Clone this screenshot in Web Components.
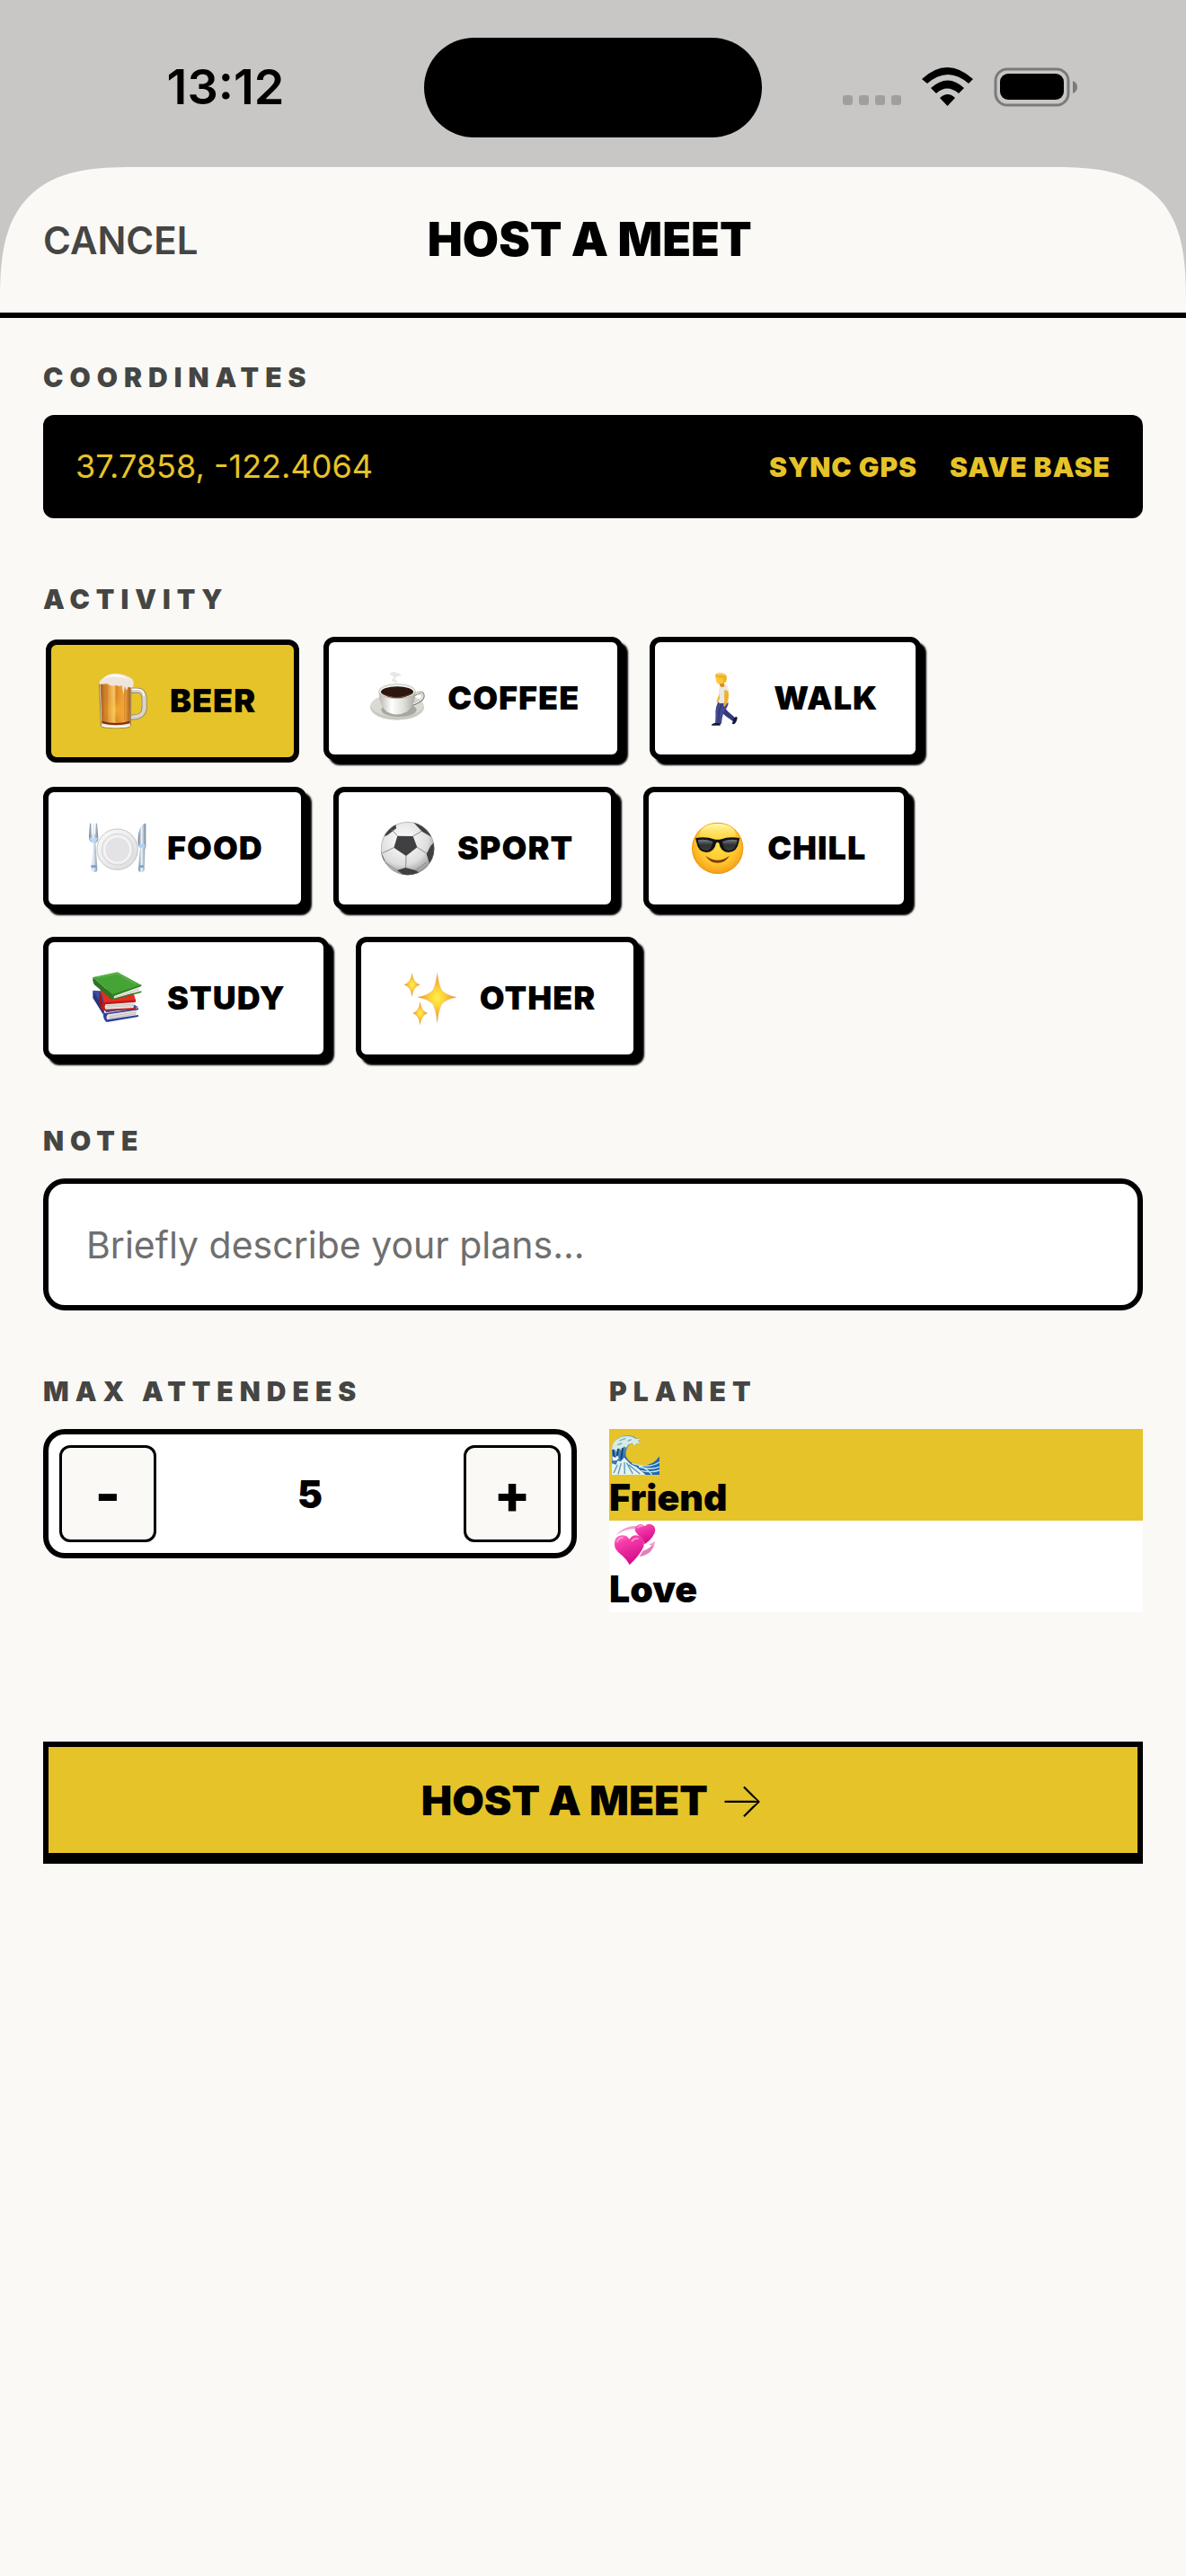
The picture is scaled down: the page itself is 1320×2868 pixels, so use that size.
<!DOCTYPE html>
<html lang="en">
<head>
<meta charset="utf-8">
<meta name="viewport" content="width=device-width, initial-scale=1">
<title>Host a Meet</title>
<style>
    :root {
        --paper: #faf9f5;
        --ink: #000;
        --muted: #454543;
        --accent: #e6c328;
        --backdrop: #c8c7c5;
    }
    body {
        margin: 0;
        background: var(--backdrop);
        color: var(--ink);
        font-family: Inter, "Liberation Sans", sans-serif;
    }
</style>
</head>
<body>
<host-screen></host-screen>

<script>
const LABEL_CSS = `
    .label {
        display: block;
        margin: 0 0 24px;
        font-size: 30px;
        line-height: 36px;
        font-weight: 900;
        letter-spacing: 7px;
        color: var(--muted);
        text-transform: uppercase;
    }
`;

// Pictograms, keyed by name: [viewBox, markup]
const PICTOS = {
    beer: ['0 0 210 195', `
        <defs>
            <linearGradient id="b" x1="0" x2="1"><stop offset="0" stop-color="#a85a1c"/><stop offset=".2" stop-color="#d98a2b"/><stop offset=".45" stop-color="#f6c565"/><stop offset=".55" stop-color="#e58a22"/><stop offset=".8" stop-color="#f0a93c"/><stop offset="1" stop-color="#a9571a"/></linearGradient>
            <radialGradient id="g" cy=".6"><stop offset="0" stop-color="#ffd84a"/><stop offset="1" stop-color="#f09a20" stop-opacity="0"/></radialGradient>
        </defs>
        <path d="M136 62h24c20 0 25 12 25 30v26c0 22-12 34-46 34" fill="none" stroke="#8d8272" stroke-width="18"/>
        <path d="M136 62h24c20 0 25 12 25 30v26c0 22-12 34-46 34" fill="none" stroke="#dcd4c5" stroke-width="13"/>
        <path d="M140 58h22c16 0 20 8 22 22" fill="none" stroke="#fff" stroke-width="4"/>
        <path d="M34 34l6 146q1 8 50 8t49-8l2-146z" fill="#e9e1cf" stroke="#6f5632" stroke-width="2"/>
        <path d="M38 40l5 126q2 9 47 9t47-9l2-126z" fill="url(#b)"/>
        <path d="M60 45v118M91 42v124M119 45v118" stroke="#9a4f17" stroke-width="2" opacity=".55"/>
        <ellipse cx="88" cy="118" rx="45" ry="48" fill="url(#g)" opacity=".5"/>
        <path d="M43 164q47 14 94 0v8q-47 12-94 0z" fill="#81310c"/>
        <path d="M45 180q45 9 92 0" fill="none" stroke="#fff" stroke-width="4"/>
        <path d="M32 40q3-12 16-19Q60 6 88 5q35 2 54 17 10 9 6 26l-5 5-12-3-5 12-6-14-5 27-5-29-10 2-9-3-16 2-15-9-14 3z" fill="#eee5dc"/>
        <path d="M46 23q16-15 42-14t46 17q-40-17-88-3z" fill="#fffaf5"/>`],
    coffee: ['0 0 210 195', `
        <defs>
            <linearGradient id="c" x1="0" x2="1"><stop offset="0" stop-color="#b7b5ac"/><stop offset=".35" stop-color="#fff"/><stop offset=".7" stop-color="#dddcd5"/><stop offset="1" stop-color="#a9a79e"/></linearGradient>
        </defs>
        <ellipse cx="102" cy="127" rx="90" ry="43" fill="#c9cac4"/>
        <ellipse cx="102" cy="121" rx="88" ry="37" fill="#d9dad4"/>
        <ellipse cx="108" cy="136" rx="59" ry="23" fill="#a6a89f"/>
        <path d="M159 86q25-14 30 0 5 18-39 33" fill="none" stroke="#77756e" stroke-width="9"/>
        <path d="M159 85q25-13 29 1 4 17-38 32" fill="none" stroke="#efeeea" stroke-width="5"/>
        <path d="M41 74q1 51 28 69 34 17 67-1 27-21 27-68z" fill="url(#c)"/>
        <ellipse cx="102" cy="74" rx="61" ry="24" fill="#f4f4f0" stroke="#a5a49d" stroke-width="2"/>
        <ellipse cx="102" cy="76" rx="54" ry="18" fill="#2c1710"/>
        <path d="M52 80q50 27 101-1-18 18-51 18T52 80z" fill="#6b3d25"/>
        <path d="M75 18q15-15 24-6 15 0 16 11-17-3-20 12 12 6 5 13-9-8-15-7-2-9 7-11-4-10-17-12z" fill="#c9c9c9" opacity=".45"/>`],
    walk: ['0 0 210 195', `
        <path d="M98 112q9 22 26 35 12 9 20 19l-10 8q-10-7-24-17-15-10-22-40z" fill="#343a79"/>
        <path d="M134 168l10-10 5 3q-1 15-11 23l-7-2 4-10z" fill="#14193b"/>
        <path d="M84 110h35q1 12-13 30-8 14-10 42H75q2-29 1-41 1-16 8-31z" fill="#42498f"/>
        <path d="M97 117q-12 20-11 61" fill="none" stroke="#303671" stroke-width="4"/>
        <path d="M64 184q11-7 15-4h13v8H63z" fill="#14193b"/>
        <path d="M89 54q18-8 26-1 8 20 4 60l-31 1q2-20-2-30z" fill="#e9e9e6"/>
        <path d="M106 70q15-3 14 18 0 13-5 25l-8 12-5-4 4-14-1-18z" fill="#f0b22c"/>
        <path d="M89 82l-10 27 5 3 6-14z" fill="#f0b22c"/>
        <path d="M87 42l17 2 2 14q-9 4-14 0z" fill="#d88d1b"/>
        <path d="M75 22q2-9 17-10 20 2 21 18 1 14-10 17l-18 3-6-7z" fill="#ffc83d"/>
        <path d="M76 24q-2-7 8-10 22-5 29 9 3 12-6 23l-6-2q2-10-3-15-10 3-22-5z" fill="#efb527"/>
        <path d="M82 18q12-6 24 1" fill="none" stroke="#ffe27a" stroke-width="4"/>`],
    food: ['0 0 210 195', `
        <defs>
            <linearGradient id="m" x1="0" x2="1"><stop offset="0" stop-color="#617386"/><stop offset=".45" stop-color="#eaf4ff"/><stop offset="1" stop-color="#74828f"/></linearGradient>
            <linearGradient id="p" x1="0" y1="0" x2="1" y2="1"><stop offset="0" stop-color="#fdfdfd"/><stop offset="1" stop-color="#d9dadc"/></linearGradient>
        </defs>
        <circle cx="104" cy="101" r="68" fill="url(#p)" stroke="#a9abae" stroke-width="2"/>
        <circle cx="104" cy="101" r="52" fill="#ececed" stroke="#c5c6c9" stroke-width="2"/>
        <circle cx="104" cy="102" r="43" fill="#e3e3e5" stroke="#fafafa" stroke-width="4"/>
        <path d="M12 14h4l2 37h3l1-37h4l1 37h3l2-37h4l4 48q0 13-9 18l6 87q0 10-9 10t-10-10l5-87Q10 74 9 62z" fill="url(#m)"/>
        <path d="M10 61q3 14 15 18 11-4 14-18-14 7-29 0z" fill="#b4dcff"/>
        <path d="M194 14l5 1v79l-3 5-2 70q-2 9-10 9-9 0-10-9l6-73q-7-4-7-18-1-53 21-64z" fill="url(#m)"/>
        <path d="M176 83h20v13l-17-1z" fill="#a9d5fb"/>
        <path d="M16 158h18M177 158h15" stroke="#76a7cf" stroke-width="8"/>`],
    sport: ['0 0 210 195', `
        <defs>
            <radialGradient id="s" cx=".42" cy=".35" r=".65"><stop offset="0" stop-color="#fff"/><stop offset=".7" stop-color="#dedede"/><stop offset="1" stop-color="#9a9a9a"/></radialGradient>
            <clipPath id="k"><circle cx="104" cy="98" r="89"/></clipPath>
        </defs>
        <circle cx="104" cy="98" r="89" fill="url(#s)"/>
        <g clip-path="url(#k)" fill="#404042">
            <path d="M70 56l52 1 14 37-37 29-41-28z"/>
            <path d="M122 9l39 6 25 46-34-20z"/>
            <path d="M64 9L20 50 7 65l30-12 29-22z"/>
            <path d="M196 74l-15 15-14 27 10 32 24-30z"/>
            <path d="M12 91l6 25 12 29-22-24z"/>
            <path d="M68 171l29-9 34 9 15 10-45 12z"/>
            <g fill="none" stroke="#8b8b8b" stroke-width="3">
                <path d="M70 56L50 34M122 57l29-17M136 94l31 20M99 123l-1 39M58 95l-37 18M131 171l35-26M68 171l-38-26"/>
            </g>
        </g>
        <circle cx="104" cy="98" r="88" fill="none" stroke="#777" stroke-width="2" opacity=".6"/>`],
    chill: ['0 0 210 195', `
        <defs>
            <radialGradient id="f" cx=".5" cy=".42" r=".6"><stop offset="0" stop-color="#ffe144"/><stop offset=".65" stop-color="#ffc42b"/><stop offset="1" stop-color="#f39818"/></radialGradient>
            <linearGradient id="h" x1="0" y1="0" x2="0" y2="1"><stop offset="0" stop-color="#fffbb0"/><stop offset="1" stop-color="#ffe14a" stop-opacity="0"/></linearGradient>
            <linearGradient id="l" x1="0" y1="0" x2="0" y2="1"><stop offset="0" stop-color="#777b80"/><stop offset=".5" stop-color="#2e3032"/><stop offset="1" stop-color="#3a3c3e"/></linearGradient>
        </defs>
        <circle cx="104" cy="97" r="86" fill="url(#f)"/>
        <circle cx="104" cy="97" r="84" fill="none" stroke="#e58b10" stroke-width="3" opacity=".55"/>
        <ellipse cx="104" cy="49" rx="60" ry="34" fill="url(#h)"/>
        <path d="M30 63q38-6 61 4 13 3 26 0 23-10 61-4l-3 12q-5 35-35 36-26-1-31-31-5-5-10 0-6 30-32 31-29-1-34-36z" fill="#111214"/>
        <path d="M38 70q25-5 50 5-3 30-23 30-23-1-27-35zM170 70q-25-5-50 5 3 30 23 30 23-1 27-35z" fill="url(#l)"/>
        <path d="M64 122q40 30 80 0-14 24-40 24t-40-24z" fill="#793c0a"/>`],
    study: ['0 0 210 195', `
        <path d="M22 71l28 29-3 4L71 175 22 96z" fill="#28367e"/>
        <path d="M22 71l60 4 92 52-20 6-86 14z" fill="#3c4da8"/>
        <path d="M58 146l112-18-4 30-98 16z" fill="#e5e2e2"/>
        <path d="M68 147l106-17v6L72 151q-8 8-2 18l104-16v6L68 177q-16-14-8-31z" fill="#303f96"/>
        <path d="M76 164l90-14M77 158l90-14" stroke="#b1adb0" stroke-width="2"/>
        <path d="M45 70l-3 37 10 31 4-27z" fill="#a31615"/>
        <path d="M46 65l110 10 10 31-104 10z" fill="#e32d25"/>
        <path d="M58 114l104-9-5 27-95 4z" fill="#e9e5e2"/>
        <path d="M56 111l109-8v7l-101 8q-5 9 0 16l101-5v7l-108 3q-12-14-1-28z" fill="#bd1d18"/>
        <path d="M68 127l90-5M68 122l90-5" stroke="#b9b3ae" stroke-width="2"/>
        <path d="M22 27l66 58-2 17-60-51q-6-11-4-24z" fill="#2b7621"/>
        <path d="M22 27L104 10l80 43-94 33z" fill="#46a437"/>
        <path d="M33 28l70-13 64 36" fill="none" stroke="#6cc157" stroke-width="4" opacity=".6"/>
        <path d="M90 86l90-32-4 20-84 24z" fill="#eeeae7"/>
        <path d="M86 85l98-33v5L94 89q-5 8 1 9l89-25v5L92 103q-14-4-6-18z" fill="#2d8122"/>
        <path d="M96 94l80-26" stroke="#b8b4b0" stroke-width="2"/>`],
    other: ['0 0 210 195', `
        <defs>
            <radialGradient id="o"><stop offset="0" stop-color="#fff04a"/><stop offset=".35" stop-color="#fcd53a"/><stop offset="1" stop-color="#ec8a2b"/></radialGradient>
        </defs>
        <g fill="url(#o)" stroke="#ee9a45" stroke-width="1">
            <path d="M128 14q4 36 14 56 15 18 50 24-35 6-50 24-10 20-14 60-4-40-14-60-15-18-51-24 36-6 51-24 10-20 14-56z"/>
            <path d="M44 14q3 31 26 38-23 8-26 38-4-30-26-38 22-7 26-38z"/>
            <path d="M71 110q3 30 24 37-21 8-24 38-4-30-24-38 20-7 24-37z"/>
        </g>`],
    wave: ['0 0 168 153', `
        <defs>
            <linearGradient id="w" x1="0" y1="0" x2="1" y2="1"><stop offset="0" stop-color="#9fc9d1"/><stop offset=".45" stop-color="#2467a8"/><stop offset="1" stop-color="#1e6cb5"/></linearGradient>
        </defs>
        <path d="M9 153V60q7-25 28-33 17-10 43-3l12 8 12 0-7 7 9 8-13 1-6 9-9-9-10 3q-16 19-12 40 9 24 42 29 45 8 70-29v62z" fill="url(#w)"/>
        <path d="M9 68q2-25 19-34 20-14 49-8l13 7 14-1-8 8 10 7-14 1-6 9-9-10-12 4-8 11-9-4-5 14-10-8-7 13-8-9z" fill="#d7ebe5"/>
        <path d="M13 69l4 27M30 66l-4 30M45 63l-5 37" stroke="#12447f" stroke-width="6"/>
        <path d="M9 153v-38l14 4 5-13 11 2 11-13 22 23 19 9 31 26z" fill="#e7f2ef"/>
        <path d="M28 119l-13 28M40 114l-10 37M51 111l1 39M58 113l21 37M65 119l38 31" stroke="#5497bd" stroke-width="4"/>
        <path d="M88 119q53 11 80-9M99 126q40 12 69 0M107 139q34 8 61-1M76 115q45 9 67 38" fill="none" stroke="#cfe5e6" stroke-width="4"/>
        <path d="M34 39l21-8M28 53l14-5M62 40l12-5" stroke="#74a9bb" stroke-width="4"/>
        <path d="M11 91l10 5 7-8 4 10-8 7-13-1z" fill="#fff"/>`],
    love: ['0 0 168 153', `
        <defs>
            <linearGradient id="v" x1="0" y1="0" x2=".4" y2="1"><stop offset="0" stop-color="#ff7cc7"/><stop offset=".3" stop-color="#f63cab"/><stop offset="1" stop-color="#d50b87"/></linearGradient>
        </defs>
        <path d="M22 51q20-31 68-34v9q-45 1-68 25z" fill="#f39aca"/>
        <path d="M151 70q-2 42-50 51l11-20q28-7 39-31z" fill="#e57fb7"/>
        <path d="M152 68q1 12-3 20l-16-9q12-2 19-11z" fill="#ef9bcc"/>
        <path d="M119 79q-6-19-23-32-16-17-7-27 14-16 30-1 6-9 15-8 19 2 20 21-2 22-35 47z" fill="url(#v)"/>
        <path d="M68 148Q58 127 32 107 13 89 19 68q5-19 25-19 16 0 23 13 13-18 33-11 21 9 15 35-9 25-47 62z" fill="url(#v)"/>
        <path d="M27 70q4-13 18-13M76 68q8-11 20-8M97 23q5-8 13-4" fill="none" stroke="#ffb1dc" stroke-width="5" stroke-linecap="round" opacity=".8"/>`]
};

class PictoIcon extends HTMLElement {
    constructor() {
        super();
        this.attachShadow({ mode: 'open' });
    }

    connectedCallback() {
        const [viewBox, markup] = PICTOS[this.getAttribute('name')];
        this.shadowRoot.innerHTML = `
            <style>
                :host { display: block; }
                svg { display: block; width: 100%; height: 100%; }
            </style>
            <svg viewBox="${viewBox}" aria-hidden="true">${markup}</svg>
        `;
    }
}
customElements.define('picto-icon', PictoIcon);

class StatusBar extends HTMLElement {
    constructor() {
        super();
        this.attachShadow({ mode: 'open' });
        this.shadowRoot.innerHTML = `
            <style>
                :host {
                    display: grid;
                    grid-template-columns: 1fr auto 1fr;
                    align-items: center;
                    box-sizing: border-box;
                    height: 186px;
                    padding-top: 8px;
                }
                .time {
                    justify-self: center;
                    padding-left: 30px;
                    font-size: 54px;
                    line-height: 62px;
                    font-weight: 600;
                }
                .island {
                    width: 376px;
                    height: 111px;
                    border-radius: 56px;
                    background: #000;
                }
                .icons {
                    justify-self: center;
                    padding-right: 30px;
                }
                svg { display: block; }
            </style>
            <span class="time">13:12</span>
            <div class="island"></div>
            <div class="icons">
                <svg width="264" height="44" viewBox="0 0 264 44" aria-hidden="true">
                    <g fill="#a09f9d">
                        <rect x="1" y="31" width="11" height="11" rx="3"/>
                        <rect x="19" y="31" width="11" height="11" rx="3"/>
                        <rect x="37" y="31" width="11" height="11" rx="3"/>
                        <rect x="55" y="31" width="11" height="11" rx="3"/>
                    </g>
                    <path d="M89 13q28-26 57 0l-5 5q-23-20-46 0zM99 23q19-17 37 0l-6 6q-13-11-25 0zM109 34q9-8 17 0l-8.500 9z"/>
                    <rect x="171" y="2" width="81" height="40" rx="13" fill="none" stroke="#7b7a79" stroke-width="3"/>
                    <rect x="176" y="7" width="71" height="29" rx="9"/>
                    <path d="M257 15q5 2 5 7t-5 7z" fill="#7b7a79"/>
                </svg>
            </div>
        `;
    }
}
customElements.define('status-bar', StatusBar);

class SheetHeader extends HTMLElement {
    constructor() {
        super();
        this.attachShadow({ mode: 'open' });
        this.shadowRoot.innerHTML = `
            <style>
                :host {
                    display: flex;
                    justify-content: space-between;
                    align-items: center;
                    padding: 48px;
                    border-bottom: 6px solid var(--ink);
                }
                button {
                    border: 0;
                    padding: 0;
                    background: none;
                    font: 600 42px/51px Inter, sans-serif;
                    color: var(--muted);
                    cursor: pointer;
                }
                h1 {
                    margin: 0;
                    font-size: 52px;
                    line-height: 66px;
                    font-weight: 900;
                }
                .spacer { width: 180px; }
            </style>
            <button type="button">CANCEL</button>
            <h1><slot></slot></h1>
            <div class="spacer"></div>
        `;
    }
}
customElements.define('sheet-header', SheetHeader);

class FormSection extends HTMLElement {
    constructor() {
        super();
        this.attachShadow({ mode: 'open' });
    }

    connectedCallback() {
        this.shadowRoot.innerHTML = `
            <style>
                :host { display: block; }
                ${LABEL_CSS}
            </style>
            <div role="group" aria-labelledby="label">
                <span class="label" id="label">${this.getAttribute('label')}</span>
                <slot></slot>
            </div>
        `;
    }
}
customElements.define('form-section', FormSection);

class CoordinateBar extends HTMLElement {
    constructor() {
        super();
        this.attachShadow({ mode: 'open' });
        this.shadowRoot.innerHTML = `
            <style>
                :host {
                    display: flex;
                    align-items: center;
                    gap: 36px;
                    padding: 36px;
                    border-radius: 12px;
                    background: var(--ink);
                    color: var(--accent);
                }
                output {
                    flex: 1;
                    font-size: 36px;
                    line-height: 43px;
                    font-weight: 400;
                }
                button {
                    border: 0;
                    padding: 0;
                    background: none;
                    color: inherit;
                    font: 900 30px/36px Inter, sans-serif;
                    letter-spacing: 1px;
                    cursor: pointer;
                }
            </style>
            <output>37.7858, -122.4064</output>
            <button type="button">SYNC GPS</button>
            <button type="button">SAVE BASE</button>
        `;
    }
}
customElements.define('coordinate-bar', CoordinateBar);

class ActivityChip extends HTMLElement {
    constructor() {
        super();
        this.attachShadow({ mode: 'open' });
    }

    connectedCallback() {
        const selected = this.hasAttribute('selected');
        this.shadowRoot.innerHTML = `
            <style>
                :host { display: block; }
                button {
                    display: flex;
                    align-items: center;
                    gap: 20px;
                    padding: 30px 42px;
                    border: 6px solid var(--ink);
                    border-radius: 12px;
                    background: #fff;
                    color: var(--ink);
                    box-shadow: 6px 6px 2px var(--ink);
                    font: 900 36px/43px Inter, sans-serif;
                    letter-spacing: 1px;
                    cursor: pointer;
                }
                button[aria-pressed="true"] {
                    background: var(--accent);
                    box-shadow: none;
                    transform: translate(3px, 3px);
                }
                picto-icon {
                    width: 70px;
                    height: 65px;
                }
            </style>
            <button type="button" aria-pressed="${selected}">
                <picto-icon name="${this.getAttribute('icon')}"></picto-icon>
                <span><slot></slot></span>
            </button>
        `;
    }

    set selected(value) {
        this.shadowRoot.querySelector('button').setAttribute('aria-pressed', value);
    }
}
customElements.define('activity-chip', ActivityChip);

class ActivityPicker extends HTMLElement {
    constructor() {
        super();
        this.attachShadow({ mode: 'open' });
        this.shadowRoot.innerHTML = `
            <style>
                :host {
                    display: flex;
                    flex-wrap: wrap;
                    gap: 30px;
                    padding-right: 160px;
                }
            </style>
            <activity-chip icon="beer" selected>BEER</activity-chip>
            <activity-chip icon="coffee">COFFEE</activity-chip>
            <activity-chip icon="walk">WALK</activity-chip>
            <activity-chip icon="food">FOOD</activity-chip>
            <activity-chip icon="sport">SPORT</activity-chip>
            <activity-chip icon="chill">CHILL</activity-chip>
            <activity-chip icon="study">STUDY</activity-chip>
            <activity-chip icon="other">OTHER</activity-chip>
        `;
        const chips = this.shadowRoot.querySelectorAll('activity-chip');
        chips.forEach(chip => {
            chip.addEventListener('click', () => {
                chips.forEach(c => { c.selected = c === chip; });
            });
        });
    }
}
customElements.define('activity-picker', ActivityPicker);

class NoteField extends HTMLElement {
    constructor() {
        super();
        this.attachShadow({ mode: 'open' });
        this.shadowRoot.innerHTML = `
            <style>
                :host { display: block; }
                ${LABEL_CSS}
                input {
                    display: block;
                    box-sizing: border-box;
                    width: 100%;
                    height: 147px;
                    padding: 0 42px;
                    border: 6px solid var(--ink);
                    border-radius: 24px;
                    background: #fff;
                    color: var(--ink);
                    font: 400 41px/51px Inter, sans-serif;
                }
                input::placeholder { color: #6f6f6f; opacity: 1; }
            </style>
            <label class="label" for="note">NOTE</label>
            <input id="note" type="text" placeholder="Briefly describe your plans...">
        `;
    }
}
customElements.define('note-field', NoteField);

class NumberStepper extends HTMLElement {
    constructor() {
        super();
        this.attachShadow({ mode: 'open' });
        this.value = 5;
        this.shadowRoot.innerHTML = `
            <style>
                :host {
                    display: flex;
                    align-items: center;
                    justify-content: space-between;
                    padding: 12px;
                    border: 6px solid var(--ink);
                    border-radius: 24px;
                    background: #fff;
                }
                button {
                    width: 108px;
                    height: 108px;
                    padding: 0;
                    border: 3px solid var(--ink);
                    border-radius: 12px;
                    background: var(--paper);
                    color: var(--ink);
                    font: 800 60px/66px Inter, sans-serif;
                    cursor: pointer;
                }
                output {
                    font-size: 42px;
                    line-height: 51px;
                    font-weight: 900;
                }
            </style>
            <button type="button" id="less" aria-label="Fewer attendees">-</button>
            <output>5</output>
            <button type="button" id="more" aria-label="More attendees">+</button>
        `;
        this.shadowRoot.querySelector('#less').addEventListener('click', () => this.step(-1));
        this.shadowRoot.querySelector('#more').addEventListener('click', () => this.step(1));
    }

    step(by) {
        this.value = Math.max(1, this.value + by);
        this.shadowRoot.querySelector('output').textContent = this.value;
    }
}
customElements.define('number-stepper', NumberStepper);

class PlanetPicker extends HTMLElement {
    constructor() {
        super();
        this.attachShadow({ mode: 'open' });
        this.shadowRoot.innerHTML = `
            <style>
                :host { display: block; }
                button {
                    display: block;
                    width: 100%;
                    padding: 0;
                    border: 0;
                    background: #fff;
                    color: var(--ink);
                    text-align: left;
                    font: 900 41px/51px Inter, sans-serif;
                    cursor: pointer;
                }
                button[aria-pressed="true"] { background: var(--accent); }
                picto-icon {
                    width: 56px;
                    height: 51px;
                }
            </style>
            <button type="button" aria-pressed="true"><picto-icon name="wave"></picto-icon>Friend</button>
            <button type="button" aria-pressed="false"><picto-icon name="love"></picto-icon>Love</button>
        `;
        const options = this.shadowRoot.querySelectorAll('button');
        options.forEach(option => {
            option.addEventListener('click', () => {
                options.forEach(o => o.setAttribute('aria-pressed', o === option));
            });
        });
    }
}
customElements.define('planet-picker', PlanetPicker);

class SubmitButton extends HTMLElement {
    constructor() {
        super();
        this.attachShadow({ mode: 'open' });
        this.shadowRoot.innerHTML = `
            <style>
                :host { display: block; }
                button {
                    display: flex;
                    justify-content: center;
                    align-items: center;
                    gap: 12px;
                    width: 100%;
                    padding: 30px;
                    border: 6px solid var(--ink);
                    background: var(--accent);
                    color: var(--ink);
                    box-shadow: 0 6px 0 var(--ink);
                    font: 900 46px/58px Inter, sans-serif;
                    cursor: pointer;
                }
                .arrow {
                    font-size: 54px;
                    font-weight: 200;
                }
            </style>
            <button type="submit"><span><slot></slot></span><span class="arrow">→</span></button>
        `;
    }
}
customElements.define('submit-button', SubmitButton);

class HostScreen extends HTMLElement {
    constructor() {
        super();
        this.attachShadow({ mode: 'open' });
        this.shadowRoot.innerHTML = `
            <style>
                :host {
                    display: flex;
                    flex-direction: column;
                    min-height: 100vh;
                }
                main {
                    flex: 1;
                    background: var(--paper);
                    border-radius: 114px 114px 0 0;
                }
                @supports (corner-shape: superellipse(1.5)) {
                    main {
                        border-radius: 150px 150px 0 0;
                        corner-shape: superellipse(1.5);
                    }
                }
                form {
                    display: flex;
                    flex-direction: column;
                    gap: 72px;
                    padding: 48px;
                }
                .columns {
                    display: grid;
                    grid-template-columns: 1fr 1fr;
                    gap: 36px;
                    margin-bottom: 72px;
                }
            </style>
            <status-bar></status-bar>
            <main>
                <sheet-header>HOST A MEET</sheet-header>
                <form>
                    <form-section label="COORDINATES"><coordinate-bar></coordinate-bar></form-section>
                    <form-section label="ACTIVITY"><activity-picker></activity-picker></form-section>
                    <note-field></note-field>
                    <div class="columns">
                        <form-section label="MAX ATTENDEES"><number-stepper></number-stepper></form-section>
                        <form-section label="PLANET"><planet-picker></planet-picker></form-section>
                    </div>
                    <submit-button>HOST A MEET</submit-button>
                </form>
            </main>
        `;
    }
}
customElements.define('host-screen', HostScreen);
</script>
</body>
</html>
